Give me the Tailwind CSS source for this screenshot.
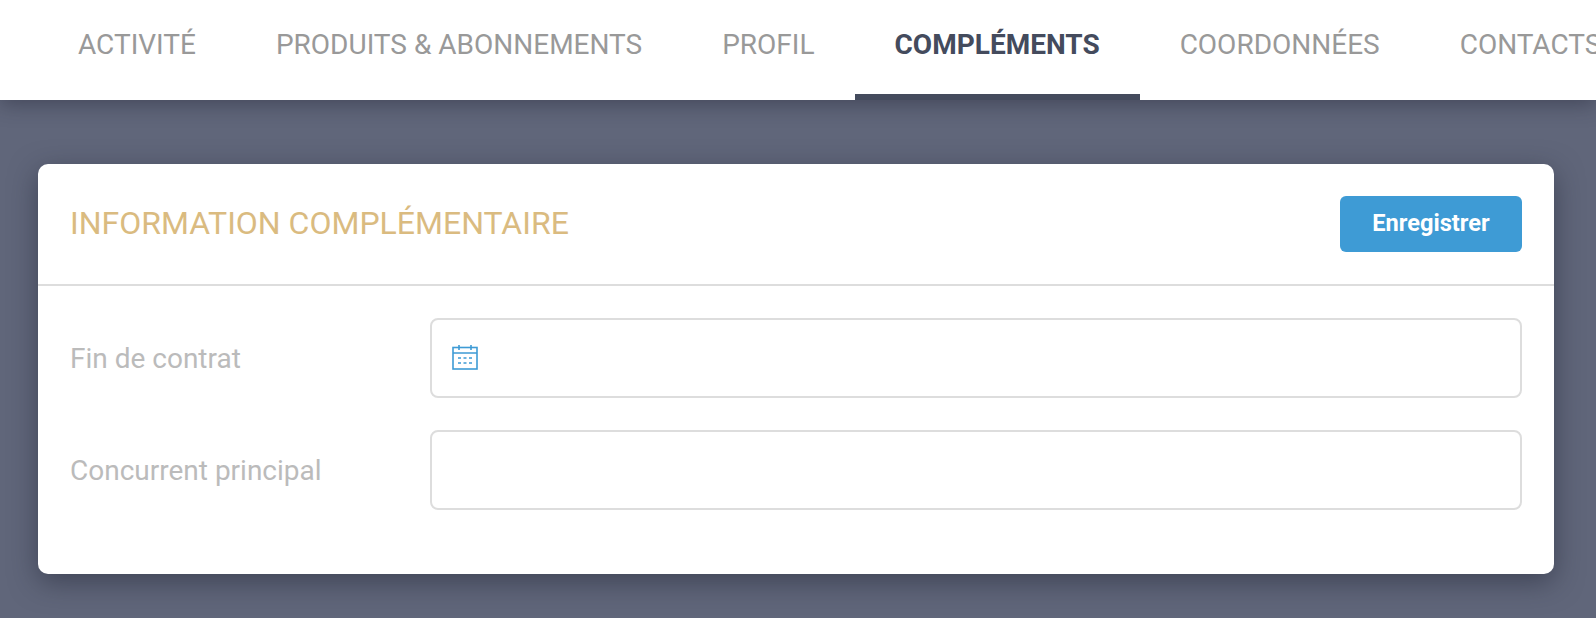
<!DOCTYPE html>
<html lang="fr">
<head>
    <meta charset="UTF-8">
    <meta name="viewport" content="width=device-width, initial-scale=1.0">
    <title>Compléments</title>
    <script src="https://cdn.jsdelivr.net/npm/@tailwindcss/browser@4"></script>
</head>
<body class="h-[618px] overflow-hidden bg-[#60667a] font-['Roboto',sans-serif]">
    <nav class="relative z-10 h-[100px] bg-white shadow-[0_4px_20px_rgba(30,34,50,0.45)] flex pl-[38px] overflow-hidden text-[28px] leading-[90px] text-[#999999] whitespace-nowrap">
        <a class="px-10 h-full shrink-0">ACTIVITÉ</a>
        <a class="px-10 h-full shrink-0">PRODUITS &amp; ABONNEMENTS</a>
        <a class="px-10 h-full shrink-0">PROFIL</a>
        <a class="px-10 h-full shrink-0 font-bold text-[#444b5d] border-b-[6px] border-[#444b5d]">COMPLÉMENTS</a>
        <a class="px-10 h-full shrink-0">COORDONNÉES</a>
        <a class="px-10 h-full shrink-0">CONTACTS</a>
    </nav>
    <main class="px-[38px] pt-16">
        <section class="w-[1516px] h-[410px] bg-white rounded-[10px] shadow-[0_8px_28px_rgba(30,34,50,0.5)]">
            <header class="h-[122px] pl-[32px] pr-[32px] flex items-center justify-between border-b-2 border-[#dddddd]">
                <h2 class="text-[32px] text-[#dabb80] pb-[2px]">INFORMATION COMPLÉMENTAIRE</h2>
                <button class="w-[182px] h-[56px] bg-[#3e9bd5] text-white text-[23.6px] font-bold rounded-md">Enregistrer</button>
            </header>
            <form class="pl-[32px] pr-[32px] pt-8">
                <div class="flex items-center h-[80px] mb-[32px]">
                    <label class="w-[360px] pt-[2px] text-[28px] text-[#bbbbbb]">Fin de contrat</label>
                    <div class="w-[1092px] h-[80px] border-2 border-[#dddddd] rounded-lg flex items-center pl-[20px] pb-[2px]">
                        <svg class="w-[26px] h-[26px]" viewBox="0 0 26 26" fill="none" stroke="#3e9bd5" stroke-width="1.6">
                            <rect x="1" y="3.5" width="24" height="21.5" />
                            <path d="M1 9h24M7 1v5M19 1v5" />
                            <path d="M6 14h3M11.5 14h3M17 14h3M6 19h3M11.5 19h3M17 19h3" />
                        </svg>
                    </div>
                </div>
                <div class="flex items-center h-[80px]">
                    <label class="w-[360px] pt-[2px] text-[28px] text-[#bbbbbb]">Concurrent principal</label>
                    <div class="w-[1092px] h-[80px] border-2 border-[#dddddd] rounded-lg"></div>
                </div>
            </form>
        </section>
    </main>
</body>
</html>
